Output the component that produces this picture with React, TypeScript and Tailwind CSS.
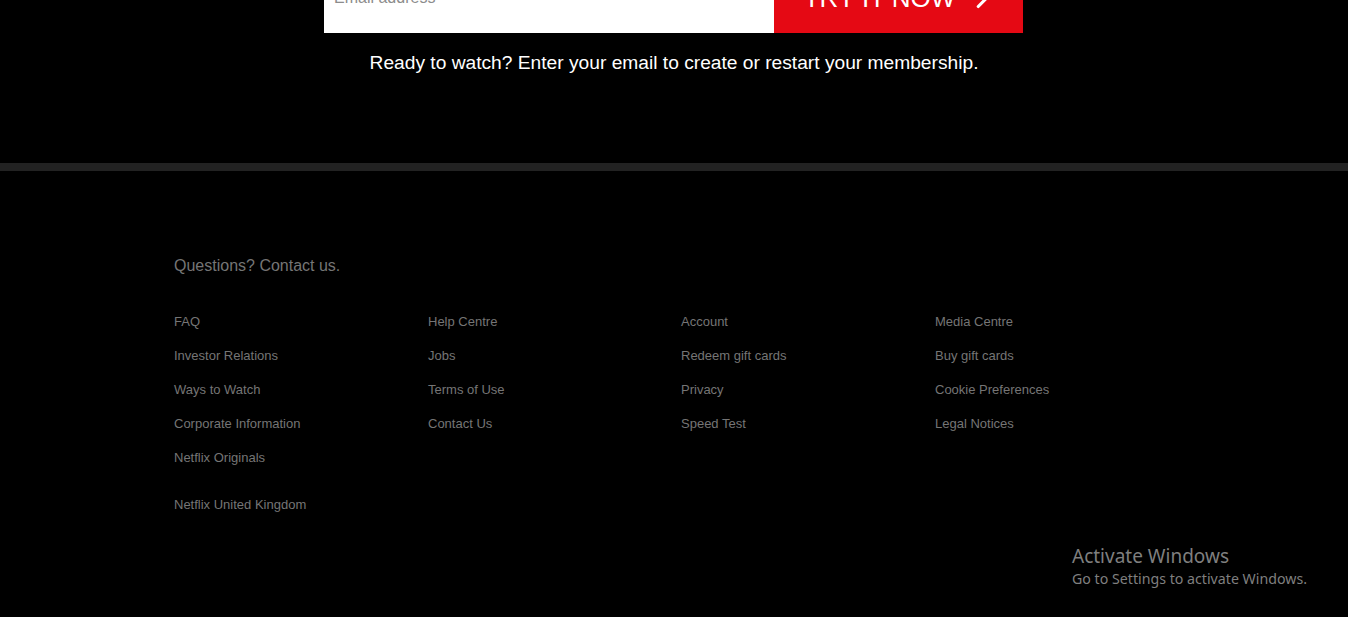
import React from 'react';
import { ChevronRight } from 'lucide-react';

const columns: string[][] = [
  ['FAQ', 'Investor Relations', 'Ways to Watch', 'Corporate Information', 'Netflix Originals'],
  ['Help Centre', 'Jobs', 'Terms of Use', 'Contact Us'],
  ['Account', 'Redeem gift cards', 'Privacy', 'Speed Test'],
  ['Media Centre', 'Buy gift cards', 'Cookie Preferences', 'Legal Notices'],
];

export default function App() {
  return (
    <div className="min-h-[617px] bg-black overflow-hidden font-['Liberation_Sans',Arial,sans-serif] relative">
      {/* Email form (page is scrolled, top is cut off) */}
      <section className="pb-[89px]">
        <form className="flex justify-center -mt-[37px] pr-[1px]" onSubmit={(e) => e.preventDefault()}>
          <input
            type="email"
            placeholder="Email address"
            className="w-[450px] h-[70px] bg-white px-[10px] text-[16px] text-black placeholder:text-[#8c8c8c] outline-none"
          />
          <button
            type="submit"
            className="w-[249px] h-[70px] bg-[#e50914] text-white text-[26px] flex items-center justify-center gap-[12px] pt-[1px] pl-[4px]"
          >
            <span>TRY IT NOW</span>
            <ChevronRight className="h-[30px] w-[30px]" strokeWidth={2.5} />
          </button>
        </form>
        <h3 className="mt-[18px] text-center text-white text-[19.2px] leading-[23px]">
          Ready to watch? Enter your email to create or restart your membership.
        </h3>
      </section>

      <div className="h-[8px] bg-[#222222]" />

      {/* Footer */}
      <footer className="w-[1000px] mx-auto pt-[85px] pb-[60px] text-[#757575]">
        <p className="text-[16px] leading-[20px]">Questions? Contact us.</p>
        <div className="mt-[38px] grid grid-cols-[254px_253px_254px_1fr]">
          {columns.map((col, i) => (
            <ul key={i} className="flex flex-col gap-[18px]">
              {col.map((link) => (
                <li key={link} className="text-[13px] leading-[16px]">
                  <a href="#">{link}</a>
                </li>
              ))}
            </ul>
          ))}
        </div>
        <p className="mt-[31px] text-[13px] leading-[16px]">Netflix United Kingdom</p>
      </footer>

      {/* Windows watermark overlay */}
      <div className="absolute left-[1072px] top-[543px] text-[#7f7f7f] font-['Noto_Sans','Open_Sans',sans-serif] pointer-events-none">
        <div className="text-[19px] leading-[26px]">Activate Windows</div>
        <div className="text-[14.2px] leading-[20px]">Go to Settings to activate Windows.</div>
      </div>
    </div>
  );
}
